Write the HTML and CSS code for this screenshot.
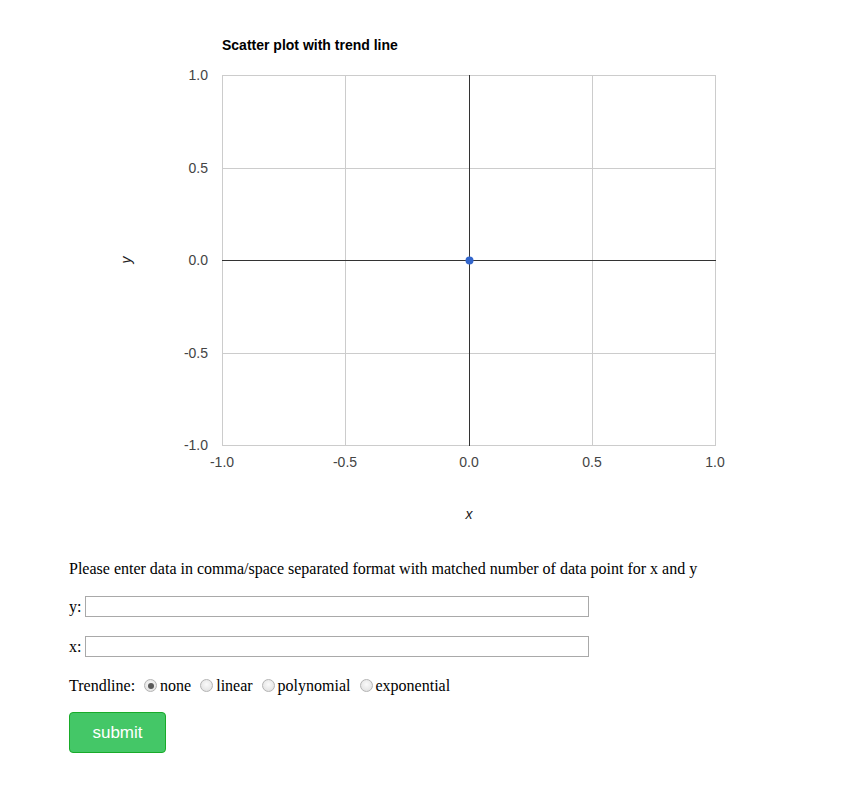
FILE: index.html
```html
<!DOCTYPE html>
<html>
<head>
<meta charset="utf-8">
<link rel="stylesheet" href="styles.css">
</head>
<body>
<div class="chart">
<svg width="849" height="540" viewBox="0 0 849 540" xmlns="http://www.w3.org/2000/svg">
  <text class="title" x="222" y="50">Scatter plot with trend line</text>
  <g class="grid">
    <line x1="222" y1="75.5" x2="715" y2="75.5"/>
    <line x1="222" y1="168.5" x2="715" y2="168.5"/>
    <line x1="222" y1="353.5" x2="715" y2="353.5"/>
    <line x1="222" y1="445.5" x2="715" y2="445.5"/>
    <line x1="222.5" y1="75" x2="222.5" y2="446"/>
    <line x1="345.5" y1="75" x2="345.5" y2="446"/>
    <line x1="592.5" y1="75" x2="592.5" y2="446"/>
    <line x1="715.5" y1="75" x2="715.5" y2="446"/>
  </g>
  <g class="axis">
    <line x1="222" y1="260.5" x2="716" y2="260.5"/>
    <line x1="469.5" y1="75" x2="469.5" y2="446"/>
  </g>
  <circle cx="469.5" cy="260.5" r="4" fill="#3366cc"/>
  <g class="ytick">
    <text x="208" y="80">1.0</text>
    <text x="208" y="173">0.5</text>
    <text x="208" y="265">0.0</text>
    <text x="208" y="358">-0.5</text>
    <text x="208" y="450">-1.0</text>
  </g>
  <g class="xtick">
    <text x="222" y="467">-1.0</text>
    <text x="345" y="467">-0.5</text>
    <text x="469" y="467">0.0</text>
    <text x="592" y="467">0.5</text>
    <text x="715" y="467">1.0</text>
  </g>
  <text class="axtitle" x="469" y="519" text-anchor="middle">x</text>
  <text class="axtitle" x="131" y="260" text-anchor="middle" transform="rotate(-90 131 260)">y</text>
</svg>
</div>
<div class="form">
  <p class="intro">Please enter data in comma/space separated format with matched number of data point for x and y</p>
  <p class="row">y: <input type="text" class="field"></p>
  <p class="row">x: <input type="text" class="field"></p>
  <p class="trend">Trendline: <input type="radio" name="t" class="radio" checked>none <input type="radio" name="t" class="radio">linear <input type="radio" name="t" class="radio">polynomial <input type="radio" name="t" class="radio">exponential</p>
  <button class="submit">submit</button>
</div>
</body>
</html>
```
FILE: styles.css
```css
html, body {
  margin: 0;
  padding: 0;
  background: #ffffff;
}
body {
  font-family: "Liberation Serif", "Times New Roman", serif;
  font-size: 16px;
  color: #000;
}
.chart svg {
  display: block;
}
.title {
  font-family: "Liberation Sans", Arial, sans-serif;
  font-size: 14px;
  font-weight: bold;
  fill: #000;
}
.grid line {
  stroke: #cccccc;
  stroke-width: 1;
}
.axis line {
  stroke: #333333;
  stroke-width: 1;
}
.ytick text {
  font-family: "Liberation Sans", Arial, sans-serif;
  font-size: 14px;
  fill: #444444;
  text-anchor: end;
}
.xtick text {
  font-family: "Liberation Sans", Arial, sans-serif;
  font-size: 14px;
  fill: #444444;
  text-anchor: middle;
}
.axtitle {
  font-family: "Liberation Sans", Arial, sans-serif;
  font-size: 14px;
  font-style: italic;
  fill: #222222;
}
.form {
  padding-left: 69px;
}
.form p {
  margin: 0;
  line-height: 18px;
}
.intro {
  padding-top: 20px;
}
.row {
  margin-top: 18px !important;
  display: flex;
  align-items: center;
  height: 21px;
  white-space: pre;
}
.row + .row {
  margin-top: 19px !important;
}
.field {
  width: 504px;
  height: 21px;
  box-sizing: border-box;
  border: 1px solid #a9a9a9;
  margin: 0;
  padding: 1px 2px;
  font-size: 13px;
}
.trend {
  margin-top: 19px !important;
}
.radio {
  -webkit-appearance: none;
  appearance: none;
  width: 13px;
  height: 13px;
  border-radius: 50%;
  margin: 3px 3px 0 5px;
  border: 1px solid #b4b4b4;
  background: radial-gradient(circle at 50% 40%, #fafafa 0%, #dcdcdc 100%);
  box-sizing: border-box;
  vertical-align: -1px;
  position: relative;
}
.radio:checked::after {
  content: "";
  position: absolute;
  left: 2.5px;
  top: 2.5px;
  width: 6px;
  height: 6px;
  border-radius: 50%;
  background: #5a5a5a;
}
.submit {
  display: block;
  margin-top: 17px;
  width: 97px;
  height: 41px;
  box-sizing: border-box;
  background: #44c767;
  border: 1px solid #18ab29;
  border-radius: 4px;
  color: #ffffff;
  font-family: "Liberation Sans", Arial, sans-serif;
  font-size: 17px;
  padding: 0;
}
```
